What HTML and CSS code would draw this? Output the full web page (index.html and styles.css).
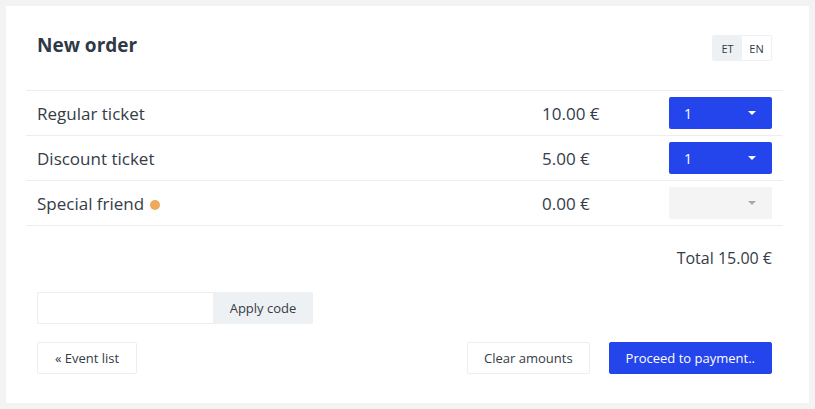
FILE: index.html
```html
<!DOCTYPE html>
<html>
<head>
    <title>New order</title>
    <link rel="stylesheet" href="styles.css">
</head>
<body>
    <div class="card">
        <div class="card-header">
            <h1 class="title">New order</h1>
            <div class="lang-toggle">
                <button class="lang lang-active">ET</button>
                <button class="lang">EN</button>
            </div>
        </div>

        <div class="tickets">
            <div class="ticket-row">
                <div class="ticket-name">Regular ticket</div>
                <div class="ticket-price">10.00 €</div>
                <div class="ticket-qty">
                    <div class="qty-select">
                        <span>1</span>
                        <span class="caret"></span>
                    </div>
                </div>
            </div>
            <div class="ticket-row">
                <div class="ticket-name">Discount ticket</div>
                <div class="ticket-price">5.00 €</div>
                <div class="ticket-qty">
                    <div class="qty-select">
                        <span>1</span>
                        <span class="caret"></span>
                    </div>
                </div>
            </div>
            <div class="ticket-row">
                <div class="ticket-name">Special friend <span class="dot"></span></div>
                <div class="ticket-price">0.00 €</div>
                <div class="ticket-qty">
                    <div class="qty-select qty-disabled">
                        <span></span>
                        <span class="caret"></span>
                    </div>
                </div>
            </div>
        </div>

        <div class="total">Total 15.00 €</div>

        <div class="code-row">
            <input class="code-input" type="text">
            <button class="btn btn-grey">Apply code</button>
        </div>

        <div class="actions">
            <button class="btn btn-back">« Event list</button>
            <div class="actions-right">
                <button class="btn">Clear amounts</button>
                <button class="btn btn-primary">Proceed to payment..</button>
            </div>
        </div>
    </div>
</body>
</html>
```

FILE: styles.css
```css
body {
    margin: 0;
    padding: 6px;
    background-color: #f3f3f3;
    color: #343c47;
    font-family: "Open Sans", sans-serif;
}
.card {
    background-color: #fff;
    padding: 0 26px 29px 20px;
}
.card-header {
    display: flex;
    justify-content: space-between;
    align-items: flex-start;
    height: 84px;
    box-sizing: border-box;
    padding: 26px 11px 0;
}
.title {
    margin: 0;
    font-size: 19px;
    line-height: 26px;
    font-weight: 700;
    color: #2f3947;
}
.lang-toggle {
    display: flex;
    margin-top: 3px;
    border: 1px solid #eef0f2;
    border-radius: 2px;
}
.lang {
    border: none;
    background: #fff;
    font-family: inherit;
    font-size: 11px;
    color: #343c47;
    width: 29px;
    height: 24px;
    padding: 0;
}
.lang-active {
    background-color: #eef1f3;
}
.ticket-row {
    display: grid;
    grid-template-columns: 1fr 127px 125px;
    align-items: center;
    height: 44px;
    border-top: 1px solid #eeeeee;
}
.ticket-row:last-child {
    border-bottom: 1px solid #eeeeee;
}
.ticket-name,
.ticket-price,
.ticket-qty {
    padding: 0 11px;
    font-size: 17px;
}
.dot {
    display: inline-block;
    width: 10px;
    height: 10px;
    border-radius: 50%;
    background-color: #efa95b;
    margin-left: 1px;
}
.qty-select {
    display: flex;
    justify-content: space-between;
    align-items: center;
    height: 32px;
    padding: 0 15px;
    background-color: #2345eb;
    color: #fff;
    border-radius: 2px;
    font-size: 14px;
}
.caret {
    width: 0;
    height: 0;
    border-left: 4px solid transparent;
    border-right: 4px solid transparent;
    border-top: 4px solid #fff;
    margin-right: 1px;
}
.qty-disabled {
    background-color: #f4f4f4;
}
.qty-disabled .caret {
    border-top-color: #a9a9a9;
}
.total {
    text-align: right;
    padding: 0 11px;
    margin-top: 20px;
    font-size: 16px;
    line-height: 24px;
}
.code-row {
    display: flex;
    margin: 22px 11px 0;
}
.code-input {
    width: 176px;
    height: 32px;
    box-sizing: border-box;
    border: 1px solid #eeeeee;
    border-right: none;
    border-radius: 2px 0 0 2px;
    outline: none;
}
.btn {
    height: 32px;
    padding: 0 16px;
    font-family: inherit;
    font-size: 13px;
    color: #343c47;
    white-space: nowrap;
    background-color: #fff;
    border: 1px solid #eeeeee;
    border-radius: 2px;
}
.btn-back {
    width: 100px;
}
.btn-grey {
    width: 100px;
    padding: 0;
    background-color: #eef1f3;
    border-color: #eef1f3;
    border-radius: 0 2px 2px 0;
}
.actions {
    display: flex;
    justify-content: space-between;
    margin: 18px 11px 0;
}
.actions-right {
    display: flex;
    gap: 19px;
}
.btn-primary {
    background-color: #2345eb;
    border-color: #2345eb;
    color: #fff;
}
```
